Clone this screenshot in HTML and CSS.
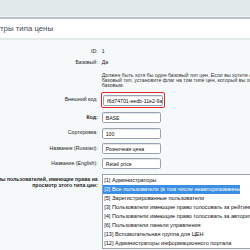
FILE: index.html
```html
<!DOCTYPE html>
<html lang="ru">
<head>
<meta charset="utf-8">
<title>Параметры типа цены</title>
<link rel="stylesheet" href="styles.css">
</head>
<body>
<div class="topbar"></div>
<div class="titlebar"><h1 class="title">Параметры типа цены</h1></div>
<div class="content">
  <div class="form">
    <div class="row row-id">
      <div class="label">ID:</div>
      <div class="value">1</div>
    </div>
    <div class="row row-base">
      <div class="label">Базовый:</div>
      <div class="value">Да</div>
    </div>
    <div class="row row-note">
      <div class="label"></div>
      <div class="value note">Должен быть хотя бы один базовый тип цен. Если вы хотите сменить<br>базовый тип, установите флаг на том типе цен, который вы хотите сделать<br>базовым.</div>
    </div>
    <div class="row row-xml">
      <div class="label">Внешний код:</div>
      <div class="value"><span class="highlight"><span class="input">f6d74701-eedb-11e2-9a3f-0026b9e5b1c4</span></span></div>
    </div>
    <div class="row row-field">
      <div class="label bold">Код:</div>
      <div class="value"><span class="input">BASE</span></div>
    </div>
    <div class="row row-field">
      <div class="label">Сортировка:</div>
      <div class="value"><span class="input">100</span></div>
    </div>
    <div class="row row-field">
      <div class="label">Название (Russian):</div>
      <div class="value"><span class="input">Розничная цена</span></div>
    </div>
    <div class="row row-field">
      <div class="label">Название (English):</div>
      <div class="value"><span class="input">Retail price</span></div>
    </div>
    <div class="row row-groups">
      <div class="label bold groups-label">
        <span class="line">Группы пользователей, имеющие права на</span>
        <span class="line">просмотр этого типа цен:</span>
      </div>
      <div class="value">
        <div class="listbox">
          <div class="option">[1] Администраторы</div>
          <div class="option selected">[2] Все пользователи (в том числе неавторизованные)</div>
          <div class="option">[5] Зарегистрированные пользователи</div>
          <div class="option">[3] Пользователи имеющие право голосовать за рейтинг</div>
          <div class="option">[4] Пользователи имеющие право голосовать за авторитет</div>
          <div class="option">[6] Пользователи панели управления</div>
          <div class="option">[13] Вспомогательная группа для ЦЕН</div>
          <div class="option">[12] Администраторы информационного портала</div>
        </div>
      </div>
    </div>
  </div>
</div>
</body>
</html>
```

FILE: styles.css
```css
html, body {
  margin: 0;
  padding: 0;
  overflow: hidden;
  width: 250px;
  height: 250px;
}
body {
  font-family: "Liberation Sans", Arial, sans-serif;
  color: #222;
  background: #f5f9f9;
}
.topbar {
  height: 16px;
  background: #e2e9eb;
  border-bottom: 1px solid #f0f4f5;
  box-shadow: 0 2px 0 #bcc5c7;
  margin-bottom: 2px;
}
.titlebar {
  height: 19px;
  background: #fff;
  border-bottom: 2px solid #e3e8e9;
  display: flex;
  align-items: center;
  overflow: hidden;
}
.title {
  margin: 0 0 0 -28px;
  font-size: 7.8px;
  font-weight: normal;
  color: #3f4b54;
  white-space: nowrap;
}
.content {
  padding-top: 7px;
}
.form {
  display: grid;
  grid-template-columns: 97.7px 1fr;
  column-gap: 4px;
}
.row {
  display: contents;
}
.label {
  font-size: 5.2px;
  line-height: 5.5px;
  text-align: right;
  white-space: nowrap;
  display: flex;
  align-items: center;
  justify-content: flex-end;
  color: #1e1e1e;
}
.value {
  font-size: 5.2px;
  line-height: 5.5px;
  white-space: nowrap;
  display: flex;
  align-items: center;
  min-width: 0;
}
.bold {
  font-weight: bold;
}
.row-id .label, .row-id .value {
  height: 10px;
}
.row-base .label, .row-base .value {
  height: 11px;
}
.row-note .value {
  padding: 4.5px 0 2.5px;
  font-size: 5.2px;
  line-height: 5px;
  display: block;
  color: #333;
}
.row-xml .label, .row-xml .value {
  height: 20px;
}
.row-xml .value {
  align-items: flex-start;
}
.highlight {
  display: inline-block;
  margin-top: 2.3px;
  margin-left: -1px;
  border: 1.3px solid #e3262c;
  border-radius: 2px;
  padding: 1.4px;
}
.input {
  display: block;
  box-sizing: border-box;
  width: 59.5px;
  height: 11px;
  background: #fff;
  border: 0.6px solid #9aa3ad;
  border-radius: 1.6px;
  box-shadow: inset 0 0.8px 0.8px -0.4px rgba(180, 188, 191, 0.7);
  padding: 0 3px;
  font-size: 5.2px;
  line-height: 10px;
  overflow: hidden;
  white-space: nowrap;
  color: #111;
}
.row-field .label, .row-field .value {
  height: 15.3px;
  align-items: flex-start;
}
.row-field .label {
  padding-top: 2.8px;
  box-sizing: border-box;
}
.row-xml + .row-field .label, .row-xml + .row-field .value {
  margin-top: 2.4px;
}
.row-groups .value {
  margin-top: 0.4px;
  align-items: flex-start;
}
.row-groups .groups-label {
  margin-top: 0.4px;
  padding-top: 3.5px;
  flex-direction: column;
  align-items: flex-end;
  justify-content: flex-start;
}
.groups-label .line {
  display: block;
  width: max-content;
  flex-shrink: 0;
}
.listbox {
  box-sizing: border-box;
  width: 160px;
  flex-shrink: 0;
  background: #fff;
  border: 0.7px solid #9aa3ad;
  padding-top: 1px;
}
.option {
  height: 9px;
  line-height: 9px;
  font-size: 5.6px;
  padding-left: 1.5px;
  color: #111;
  white-space: nowrap;
}
.option.selected {
  width: 136px;
  background: #3b8fe3;
  color: #fff;
}
```
